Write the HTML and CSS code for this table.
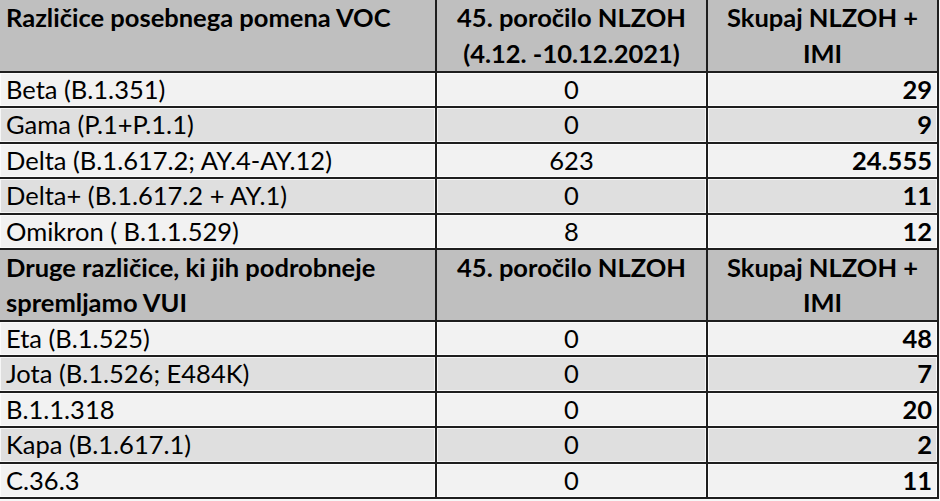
FILE: index.html
```html
<!DOCTYPE html>
<html lang="sl">
<head>
<meta charset="utf-8">
<link rel="stylesheet" href="styles.css">
</head>
<body>
<div class="tbl">
  <div class="c h left">Različice posebnega pomena VOC</div>
  <div class="c h mid">45. poročilo NLZOH<br>(4.12. -10.12.2021)</div>
  <div class="c h mid">Skupaj NLZOH +<br>IMI</div>

  <div class="c lt left">Beta (B.1.351)</div>
  <div class="c lt mid">0</div>
  <div class="c lt right">29</div>

  <div class="c dk left">Gama (P.1+P.1.1)</div>
  <div class="c dk mid">0</div>
  <div class="c dk right">9</div>

  <div class="c lt left">Delta (B.1.617.2; AY.4-AY.12)</div>
  <div class="c lt mid">623</div>
  <div class="c lt right">24.555</div>

  <div class="c dk left">Delta+ (B.1.617.2 + AY.1)</div>
  <div class="c dk mid">0</div>
  <div class="c dk right">11</div>

  <div class="c lt left">Omikron ( B.1.1.529)</div>
  <div class="c lt mid">8</div>
  <div class="c lt right">12</div>

  <div class="c h left">Druge različice, ki jih podrobneje<br>spremljamo VUI</div>
  <div class="c h mid">45. poročilo NLZOH</div>
  <div class="c h mid">Skupaj NLZOH +<br>IMI</div>

  <div class="c lt left">Eta (B.1.525)</div>
  <div class="c lt mid">0</div>
  <div class="c lt right">48</div>

  <div class="c dk left">Jota (B.1.526; E484K)</div>
  <div class="c dk mid">0</div>
  <div class="c dk right">7</div>

  <div class="c lt left">B.1.1.318</div>
  <div class="c lt mid">0</div>
  <div class="c lt right">20</div>

  <div class="c dk left">Kapa (B.1.617.1)</div>
  <div class="c dk mid">0</div>
  <div class="c dk right">2</div>

  <div class="c lt left">C.36.3</div>
  <div class="c lt mid">0</div>
  <div class="c lt right">11</div>
</div>
</body>
</html>
```
FILE: styles.css
```css
html, body {
  margin: 0;
  padding: 0;
  background: #f7f7f7;
}
body {
  width: 940px;
  height: 501px;
  overflow: hidden;
}
.tbl {
  display: grid;
  grid-template-columns: 435px 269px 229px;
  grid-template-rows: 71px repeat(5, 33.4px) 70px repeat(5, 33.4px);
  gap: 2px;
  width: 937px;
  padding: 0 2px 2px 0;
  background: #1e1e1e;
  font-family: Lato, "Open Sans", sans-serif;
  font-size: 25.5px;
  color: #000;
}
.c {
  line-height: 33.4px;
  white-space: nowrap;
  overflow: hidden;
}
.h {
  background: #bfbfbf;
  font-weight: bold;
  line-height: 35.5px;
}
.lt {
  background: #f2f2f2;
  box-shadow: inset 0 0 0 1px #fbfbfb;
}
.dk {
  background: #dfdfdf;
  box-shadow: inset 0 0 0 1px #f6f6f6;
}
.left {
  text-align: left;
  padding-left: 6px;
}
.mid {
  text-align: center;
}
.right {
  text-align: right;
  padding-right: 5px;
  font-weight: bold;
}
```
